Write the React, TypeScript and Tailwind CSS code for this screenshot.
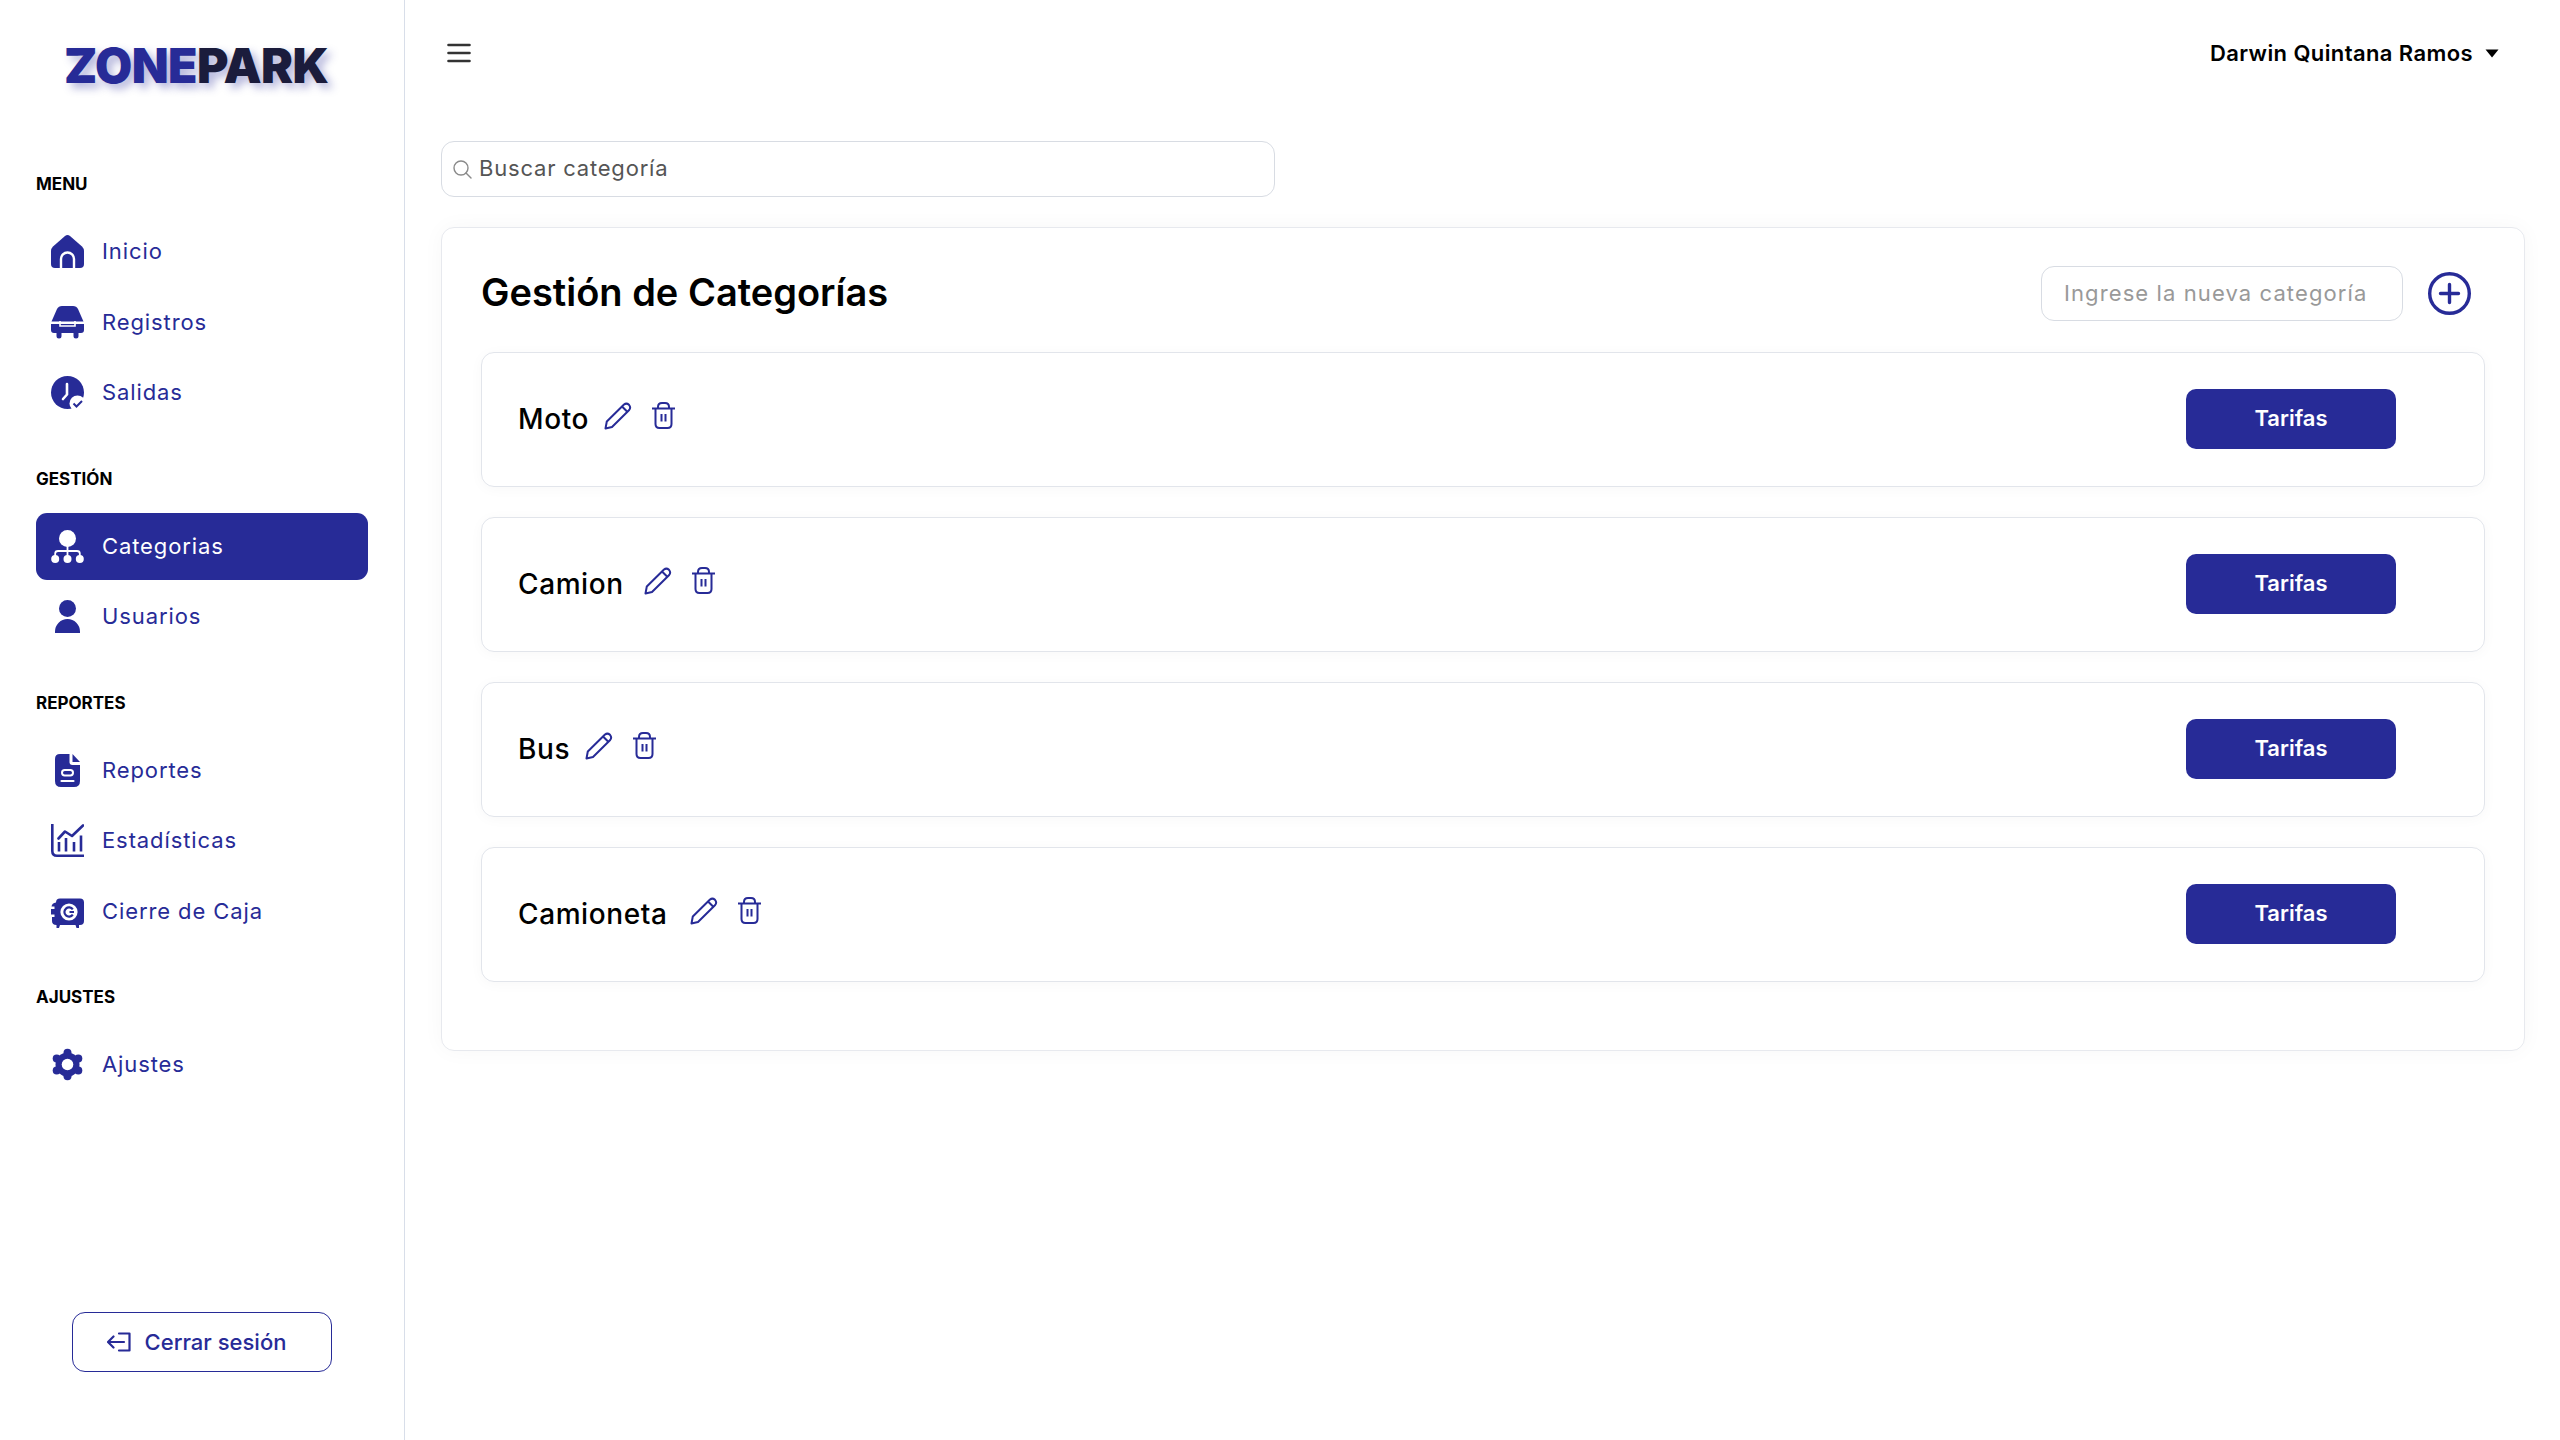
import type { ReactNode } from "react";

const BLUE = "#272b97";

const HomeIcon = () => (
  <svg width="33" height="33" viewBox="0 0 33 33" fill={BLUE}>
    <path d="M14 1 Q16.5 -.8 19 1 L31 11.5 Q33 13.5 33 16 V29 Q33 33 29 33 H4 Q0 33 0 29 V16 Q0 13.5 2 11.5 Z" />
    <path d="M10 33 V24 A6.5 6.5 0 0 1 23 24 V33" fill="none" stroke="#fff" strokeWidth="2.4" />
  </svg>
);

const CarIcon = () => (
  <svg width="33" height="33" viewBox="0 0 33 33" fill={BLUE}>
    <path d="M11 0 H22 Q25.5 0 27 3 L32.5 15.5 H.5 L6 3 Q7.5 0 11 0 Z" />
    <path d="M0 18 H33 V24 Q33 27 30 27 H27.5 V30 A2.5 2.5 0 0 1 22.5 30 V27 H10.5 V30 A2.5 2.5 0 0 1 5.5 30 V27 H3 Q0 27 0 24 Z" />
    <path d="M9 15 V20 H24 V15" fill="none" stroke="#fff" strokeWidth="1.6" />
  </svg>
);

const ClockIcon = () => (
  <svg width="33" height="33" viewBox="0 0 33 33" fill={BLUE}>
    <circle cx="16.5" cy="16.5" r="16.5" />
    <path d="M16 8 V18.5 L12 23" fill="none" stroke="#fff" strokeWidth="2.6" strokeLinecap="round" strokeLinejoin="round" />
    <circle cx="26.5" cy="27.5" r="8" fill="#fff" />
    <path d="M22.5 27.5 L25.5 30.5 L31 25" fill="none" stroke={BLUE} strokeWidth="2" />
  </svg>
);

const TreeIcon = () => (
  <svg width="33" height="33" viewBox="0 0 33 33" fill="#fff">
    <circle cx="16.5" cy="8.5" r="8.5" />
    <circle cx="4.2" cy="29" r="4" />
    <circle cx="16.5" cy="29" r="4" />
    <circle cx="28.8" cy="29" r="4" />
    <path d="M16.5 15 V26 M4.2 26 V23.5 Q4.2 21 7 21 H26 Q28.8 21 28.8 23.5 V26" fill="none" stroke="#fff" strokeWidth="1.8" />
  </svg>
);

const UserIcon = () => (
  <svg width="33" height="33" viewBox="0 0 33 33" fill={BLUE}>
    <circle cx="16.5" cy="8.5" r="8.5" />
    <path d="M4 33 V31.5 A12.5 12.5 0 0 1 29 31.5 V33 Z" />
  </svg>
);

const DocIcon = () => (
  <svg width="33" height="33" viewBox="0 0 33 33" fill={BLUE}>
    <path d="M9 0 H18.5 V8 Q18.5 11 21.5 11 H29 V27 Q29 33 23 33 H10 Q4 33 4 27 V5 Q4 0 9 0 Z" />
    <path d="M21.5 0 L29 8 H21.5 Z" />
    <rect x="11" y="16" width="11" height="5.5" rx="2.7" fill="none" stroke="#fff" strokeWidth="2" />
    <path d="M10.5 27 H22.5" stroke="#fff" strokeWidth="2.2" strokeLinecap="round" />
  </svg>
);

const ChartIcon = () => (
  <svg width="33" height="33" viewBox="0 0 33 33" fill="none" stroke={BLUE} strokeWidth="2.6">
    <path d="M1.3 0 V27 Q1.3 31.7 6 31.7 H33" />
    <path d="M7.5 14.5 L14 7.5 L21 12 L32 1.5" strokeLinecap="round" strokeLinejoin="round" />
    <path d="M8 18 V27.5 M15 14 V27.5 M23 18 V27.5 M30 11.5 V27.5" />
  </svg>
);

const SafeIcon = () => (
  <svg width="33" height="33" viewBox="0 0 33 33" fill={BLUE}>
    <path d="M5 7.5 Q5 3.5 9 3.5 H29 Q33 3.5 33 7.5 V26 Q33 30 29 30 H28 V33 H25.5 L24.5 30 H9 L8 33 H5.5 V30 Q1 30 1 26 V22 H3.5 V19.5 H0 V14 H3.5 V11.5 H0.5 Q1 8 5 7.5 Z" />
    <circle cx="18" cy="17" r="8.6" fill="#fff" />
    <path d="M21.8 14.4 A4.6 4.6 0 1 0 21.8 19.6 M18.5 17 H23" fill="none" stroke={BLUE} strokeWidth="2.2" />
  </svg>
);

const GearIcon = () => (
  <svg width="33" height="33" viewBox="0 0 33 33" fill={BLUE}>
    <circle cx="16.5" cy="16.5" r="12" />
    <circle cx="16.5" cy="4.8" r="4" />
    <circle cx="27.3" cy="10.4" r="4" />
    <circle cx="27.3" cy="22.6" r="4" />
    <circle cx="16.5" cy="28.2" r="4" />
    <circle cx="5.7" cy="22.6" r="4" />
    <circle cx="5.7" cy="10.4" r="4" />
    <circle cx="16.5" cy="16.5" r="5.8" fill="#fff" />
  </svg>
);

const PencilIcon = () => (
  <svg width="28" height="28" viewBox="0 0 28 28" fill="none" stroke={BLUE} strokeWidth="2" strokeLinejoin="round">
    <path d="M1.5 26.5 L2.8 19.5 L20 2.5 Q22.5 .6 25 2.8 Q27.2 5.5 25.2 8 L8 25 Z" />
    <path d="M18 4.5 L23.3 9.8" />
  </svg>
);

const TrashIcon = () => (
  <svg width="23" height="27" viewBox="0 0 23 27" fill="none" stroke={BLUE} strokeWidth="2">
    <path d="M0 6.5 H23 M6 6.5 V5 Q6 1 10 1 H13 Q17 1 17 5 V6.5" />
    <path d="M3.5 6.5 V22 Q3.5 26 7.5 26 H15.5 Q19.5 26 19.5 22 V6.5" />
    <path d="M9.5 12 V19.5 M13.5 12 V19.5" />
  </svg>
);

type Item = { label: string; icon: ReactNode; active?: boolean };
type Section = { title: string; items: Item[] };

const sections: Section[] = [
  {
    title: "MENU",
    items: [
      { label: "Inicio", icon: <HomeIcon /> },
      { label: "Registros", icon: <CarIcon /> },
      { label: "Salidas", icon: <ClockIcon /> },
    ],
  },
  {
    title: "GESTIÓN",
    items: [
      { label: "Categorias", icon: <TreeIcon />, active: true },
      { label: "Usuarios", icon: <UserIcon /> },
    ],
  },
  {
    title: "REPORTES",
    items: [
      { label: "Reportes", icon: <DocIcon /> },
      { label: "Estadísticas", icon: <ChartIcon /> },
      { label: "Cierre de Caja", icon: <SafeIcon /> },
    ],
  },
  {
    title: "AJUSTES",
    items: [{ label: "Ajustes", icon: <GearIcon /> }],
  },
];

const categories = [
  { name: "Moto", gap: "mr-[15px]" },
  { name: "Camion", gap: "mr-[20px]" },
  { name: "Bus", gap: "mr-[15px]" },
  { name: "Camioneta", gap: "mr-[22px]" },
];

const Sidebar = () => (
  <aside className="w-[405px] shrink-0 h-full border-r border-[#d8dee9] flex flex-col bg-white">
    <div className="h-[170px] pl-[64px] pt-[37px] shrink-0">
      <h1 className="text-[48px] leading-[58px] font-black tracking-[-0.6px] [text-shadow:5px_5px_8px_rgba(39,43,151,0.35)]">
        <span className="text-[#272b97]">ZONE</span>
        <span className="text-[#1b1c3c]">PARK</span>
      </h1>
    </div>
    <nav className="px-[36px] flex flex-col gap-[38.5px]">
      {sections.map((section) => (
        <div key={section.title}>
          <p className="h-[27px] leading-[29px] mb-[21px] text-[17px] font-bold text-black">{section.title}</p>
          <ul className="flex flex-col gap-[3.5px]">
            {section.items.map((item) => (
              <li
                key={item.label}
                className={`h-[67px] rounded-[11px] pl-[15px] flex items-center gap-[18px] text-[22px] tracking-[0.9px] ${
                  item.active ? "bg-[#272b97] text-white" : "text-[#272b97]"
                }`}
              >
                {item.icon}
                <span>{item.label}</span>
              </li>
            ))}
          </ul>
        </div>
      ))}
    </nav>
    <button className="mt-auto mb-[68px] ml-[72px] w-[260px] h-[60px] pr-[11px] rounded-[13px] border border-[#272b97] flex items-center justify-center gap-[14px] text-[22px] font-medium text-[#272b97]">
      <svg width="24" height="20" viewBox="0 0 24 20" fill="none" stroke={BLUE} strokeWidth="2.2" strokeLinejoin="round" strokeLinecap="round">
        <path d="M12 1.5 H22.5 V18.5 H12" />
        <path d="M17 10 H1.5 M6.5 4.5 L1 10 L6.5 15.5" />
      </svg>
      Cerrar sesión
    </button>
  </aside>
);

const CategoryRow = ({ name, gap }: { name: string; gap: string }) => (
  <div className="h-[135px] rounded-[13px] border border-[#e2e5eb] shadow-[0_2px_14px_rgba(0,0,0,0.03)] pl-[36px] pr-[88px] pb-[2px] flex items-center justify-between">
    <div className="flex items-center">
      <span className={`text-[28px] font-medium text-black tracking-[0.6px] ${gap}`}>{name}</span>
      <span className="flex items-center gap-[20px] -mt-[6px]">
        <PencilIcon />
        <TrashIcon />
      </span>
    </div>
    <button className="w-[210px] h-[60px] rounded-[10px] bg-[#272b97] text-white text-[22px] font-semibold">
      Tarifas
    </button>
  </div>
);

export default function App() {
  return (
    <div className="w-[2560px] h-[1440px] flex bg-white overflow-hidden font-['Inter',sans-serif]">
      <Sidebar />
      <main className="flex-1 pl-[36px] pr-[35px]">
        <header className="h-[106px] pl-[6px] pr-[26px] flex items-center justify-between">
          <svg width="24" height="20" viewBox="0 0 24 20" stroke="#333" strokeWidth="2.6" strokeLinecap="round">
            <path d="M1.5 2 H22.5 M1.5 10 H22.5 M1.5 18 H22.5" />
          </svg>
          <div className="flex items-center gap-[12px] text-[22px] font-semibold text-black tracking-[0.4px]">
            <span>Darwin Quintana Ramos</span>
            <svg width="14" height="9" viewBox="0 0 14 9" fill="#000">
              <path d="M0.5 0.5 H13.5 L7 8.5 Z" />
            </svg>
          </div>
        </header>
        <div className="mt-[35px] w-[834px] h-[56px] rounded-[13px] border border-[#d8dce3] flex items-center pl-[11px] gap-[7px]">
          <svg width="19" height="19" viewBox="0 0 19 19" fill="none" stroke="#8a8a8a" strokeWidth="1.4">
            <circle cx="8" cy="8" r="7" />
            <path d="M13 13 L18 18" strokeLinecap="round" />
          </svg>
          <input
            className="flex-1 outline-none text-[22px] tracking-[0.8px] -mt-[1px] placeholder:text-[#555]"
            placeholder="Buscar categoría"
          />
        </div>
        <section className="mt-[30px] rounded-[13px] border border-[#e7e9ee] shadow-[0_0_22px_rgba(0,0,0,0.035)] px-[39px] pt-[36px] pb-[68px]">
          <div className="h-[58px] mb-[30px] flex items-center justify-between">
            <h2 className="text-[38px] font-semibold text-black -mt-[1px]">Gestión de Categorías</h2>
            <div className="flex items-center gap-[25px] pr-[14px]">
              <input
                className="w-[362px] h-[55px] rounded-[13px] border border-[#d8dce3] px-[22px] outline-none text-[22px] tracking-[1.1px] placeholder:text-[#999]"
                placeholder="Ingrese la nueva categoría"
              />
              <svg width="43" height="43" viewBox="0 0 43 43" fill="none" stroke={BLUE} strokeWidth="3.4">
                <circle cx="21.5" cy="21.5" r="19.8" />
                <path d="M21.5 12.5 V30.5 M12.5 21.5 H30.5" strokeLinecap="round" />
              </svg>
            </div>
          </div>
          <div className="flex flex-col gap-[30px]">
            {categories.map((c) => (
              <CategoryRow key={c.name} name={c.name} gap={c.gap} />
            ))}
          </div>
        </section>
      </main>
    </div>
  );
}
